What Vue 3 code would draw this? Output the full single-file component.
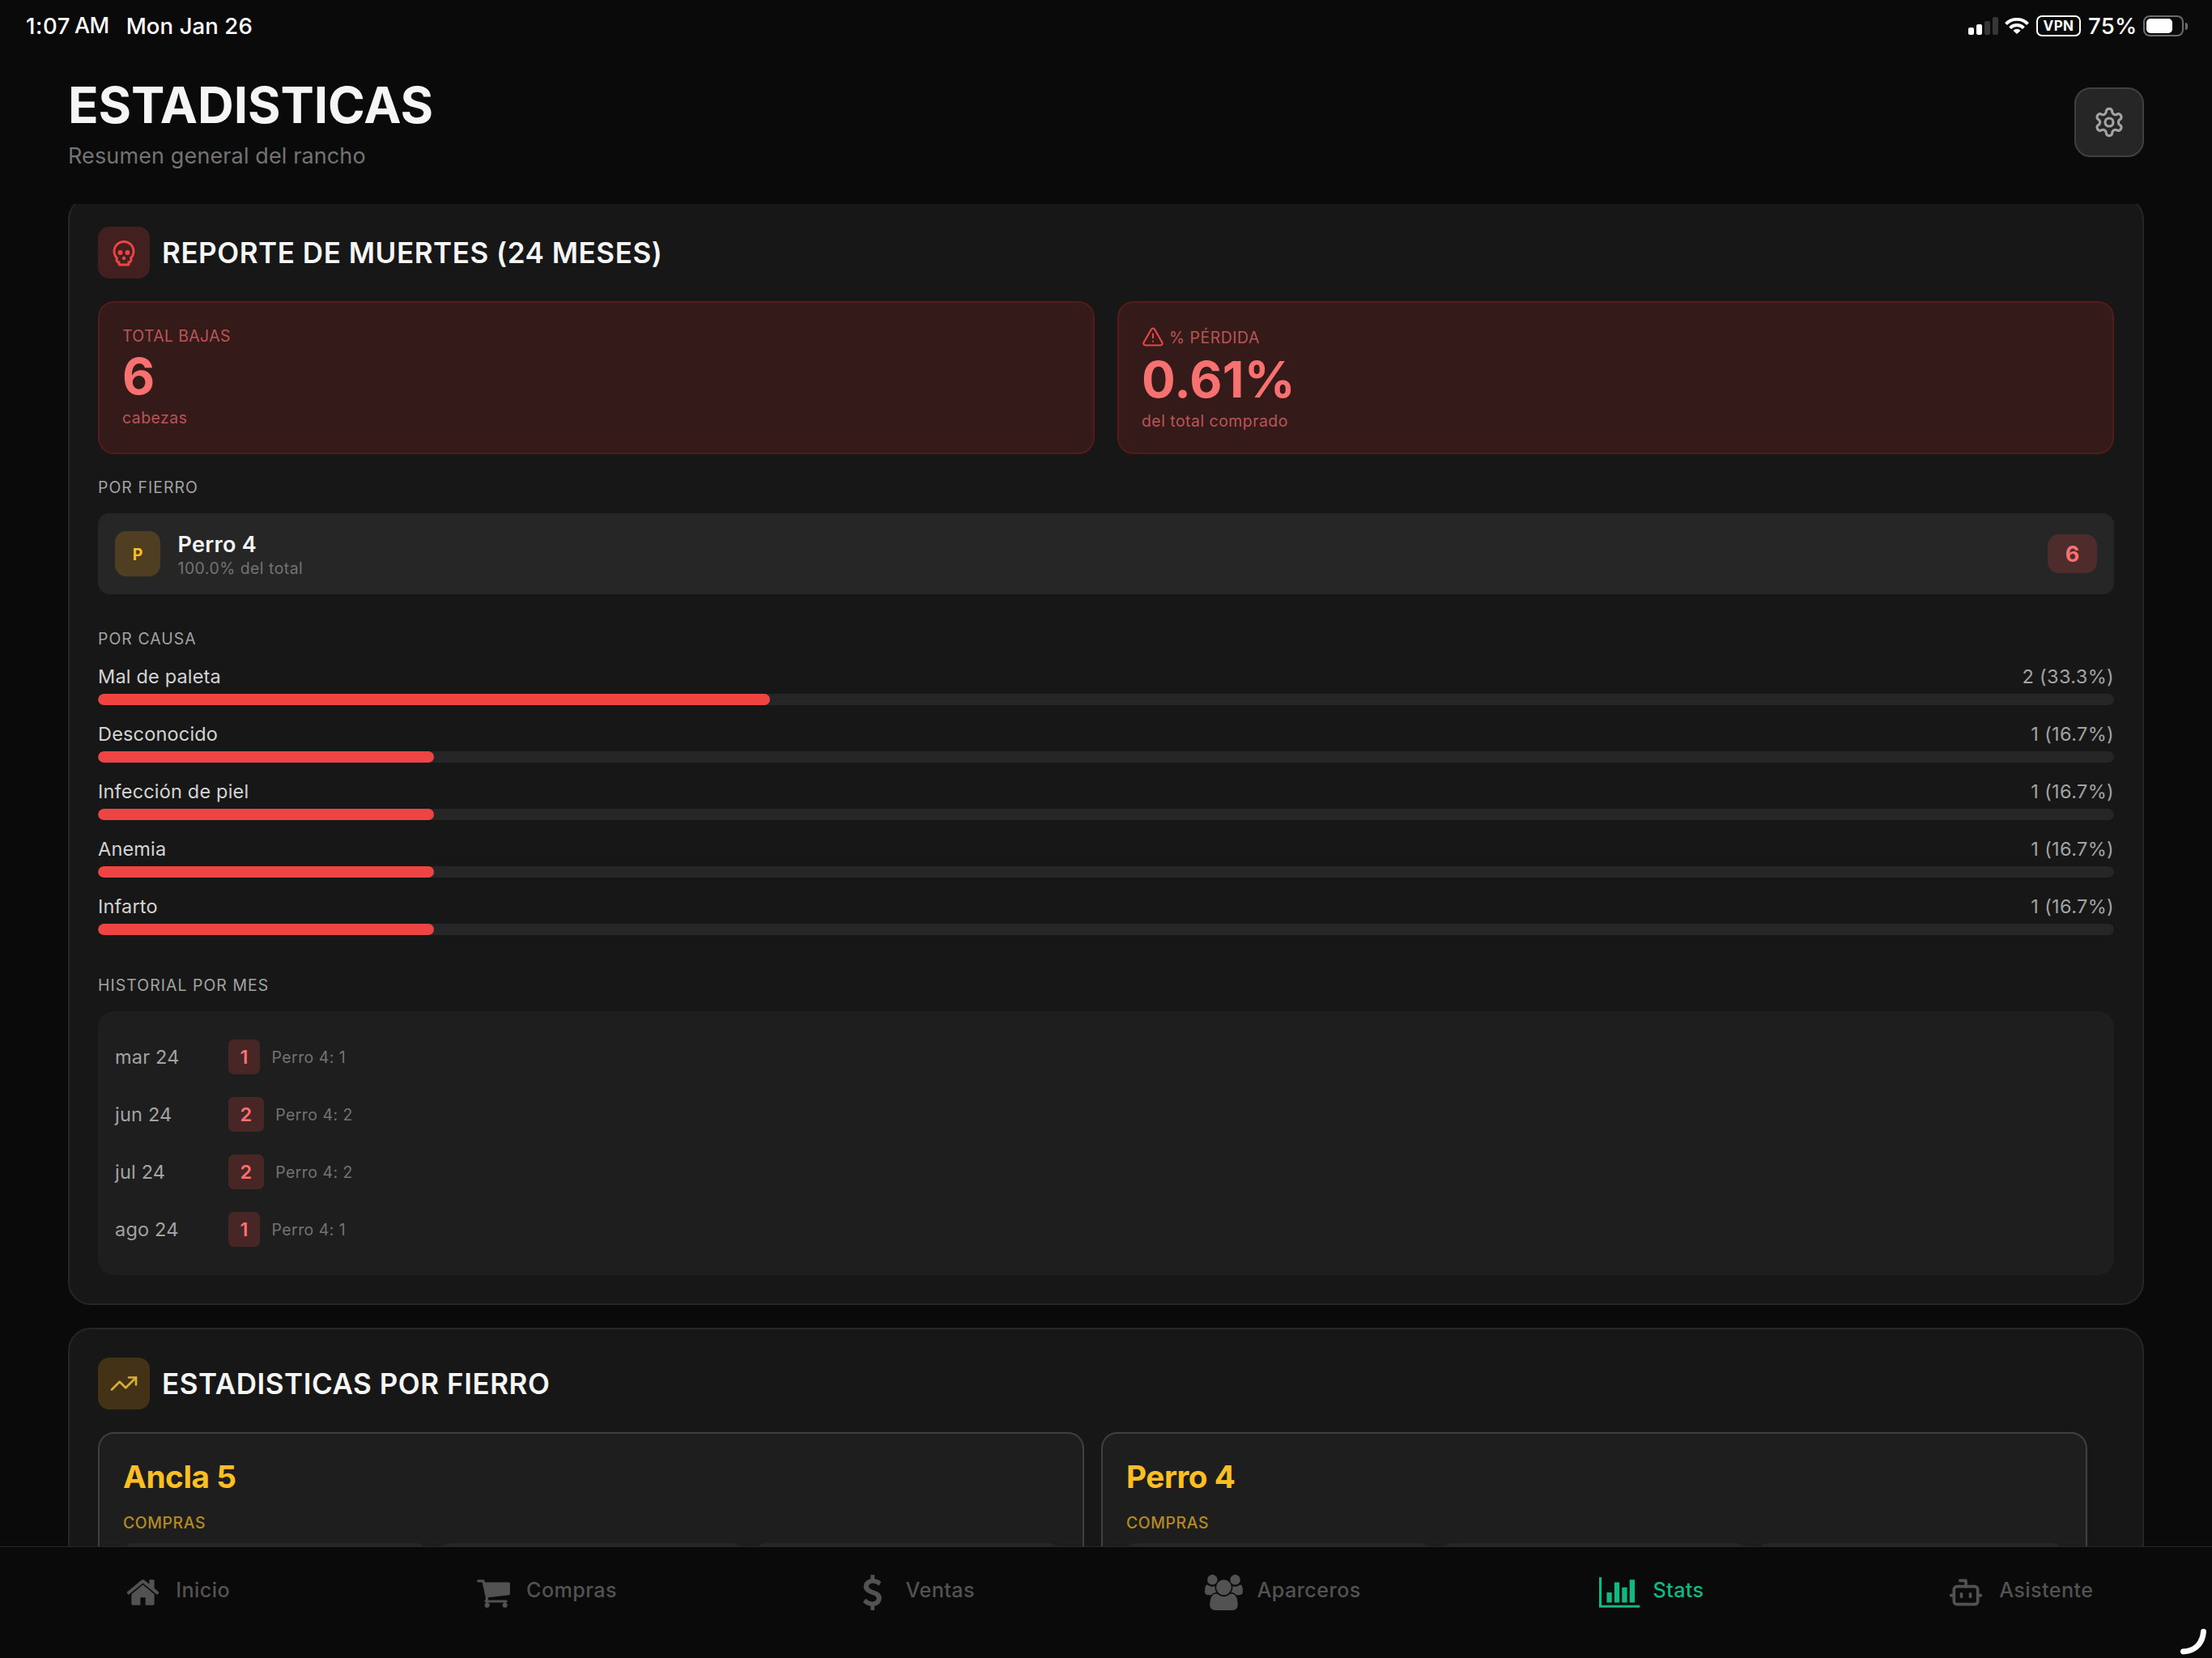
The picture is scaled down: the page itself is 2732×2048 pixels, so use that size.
<script setup>
const causas = [
  { nombre: 'Mal de paleta', valor: '2 (33.3%)', pct: 33.33 },
  { nombre: 'Desconocido', valor: '1 (16.7%)', pct: 16.67 },
  { nombre: 'Infección de piel', valor: '1 (16.7%)', pct: 16.67 },
  { nombre: 'Anemia', valor: '1 (16.7%)', pct: 16.67 },
  { nombre: 'Infarto', valor: '1 (16.7%)', pct: 16.67 },
]

const historial = [
  { mes: 'mar 24', total: 1, detalle: 'Perro 4: 1' },
  { mes: 'jun 24', total: 2, detalle: 'Perro 4: 2' },
  { mes: 'jul 24', total: 2, detalle: 'Perro 4: 2' },
  { mes: 'ago 24', total: 1, detalle: 'Perro 4: 1' },
]

const fierros = ['Ancla 5', 'Perro 4']

const tabs = [
  {
    label: 'Inicio',
    box: '64 0 1664 1792',
    width: 41,
    path: 'M1472 992v480q0 26-19 45t-45 19h-384v-384h-256v384h-384q-26 0-45-19t-19-45v-480q0-1 .5-3t.5-3l575-474 575 474q1 2 1 6zm223-69l-62 74q-8 9-21 11h-3q-13 0-21-7l-692-577-692 577q-12 8-24 7-13-2-21-11l-62-74q-8-10-7-23.5t11-21.5l719-599q32-26 76-26t76 26l244 204v-195q0-14 9-23t23-9h192q14 0 23 9t9 23v408l219 182q10 8 11 21.5t-7 23.5z',
  },
  {
    label: 'Compras',
    box: '64 0 1664 1792',
    width: 41,
    path: 'M704 1536q0 52-38 90t-90 38-90-38-38-90 38-90 90-38 90 38 38 90zm896 0q0 52-38 90t-90 38-90-38-38-90 38-90 90-38 90 38 38 90zm128-1088v512q0 24-16.5 42.5t-40.5 21.5l-1044 122q13 60 13 70 0 16-24 64h920q26 0 45 19t19 45-19 45-45 19h-1024q-26 0-45-19t-19-45q0-11 8-31.5t16-36 21.5-40 15.5-29.5l-177-823h-204q-26 0-45-19t-19-45 19-45 45-19h256q16 0 28.5 6.5t19.5 15.5 13 24.5 8 26 5.5 29.5 4.5 26h1201q26 0 45 19t19 45z',
  },
  {
    label: 'Ventas',
    box: '384 0 1024 1792',
    width: 25,
    path: 'M1362 1185q0 153-99.5 263.5t-258.5 136.5v175q0 14-9 23t-23 9h-135q-13 0-22.5-9.5t-9.5-22.5v-175q-66-9-127.5-31t-101.5-44.5-74-48-46.5-37.5-17.5-18q-17-21-2-41l103-135q7-10 23-12 15-2 24 9l2 2q113 99 243 125 37 8 74 8 81 0 142.5-43t61.5-122q0-28-15-53t-33.5-42-58.5-37.5-66-32-80-32.5q-39-16-61.5-25t-61.5-26.5-62.5-31-56.5-35.5-53.5-42.5-43.5-49-35.5-58-21-66.5-8.5-78q0-138 98-242t255-134v-180q0-13 9.5-22.5t22.5-9.5h135q14 0 23 9t9 23v176q57 6 110.5 23t87 33.5 63.5 37.5 39 29 15 14q17 18 5 38l-81 146q-8 15-23 16-14 3-27-7-3-3-14.5-12t-39-26.5-58.5-32-74.5-26-85.5-11.5q-95 0-155 43t-60 111q0 26 8.5 48t29.5 41.5 39.5 33 56 31 60.5 27 70 27.5q53 20 81 31.5t76 35 75.5 42.5 62 50 53 63.5 31.5 76.5 13 94z',
  },
  {
    label: 'Aparceros',
    box: '0 0 1920 1792',
    width: 47,
    path: 'M593 896q-162 5-265 128h-134q-82 0-138-40.5t-56-118.5q0-353 124-353 6 0 43.5 21t97.5 42.5 119 21.5q67 0 133-23-5 37-5 66 0 139 81 256zm1071 637q0 120-73 189.5t-194 69.5h-874q-121 0-194-69.5t-73-189.5q0-53 3.5-103.5t14-109 26.5-108.5 43-97.5 62-81 85.5-53.5 111.5-20q10 0 43 21.5t73 48 107 48 135 21.5 135-21.5 107-48 73-48 43-21.5q61 0 111.5 20t85.5 53.5 62 81 43 97.5 26.5 108.5 14 109 3.5 103.5zm-1024-1277q0 106-75 181t-181 75-181-75-75-181 75-181 181-75 181 75 75 181zm704 384q0 159-112.5 271.5t-271.5 112.5-271.5-112.5-112.5-271.5 112.5-271.5 271.5-112.5 271.5 112.5 112.5 271.5zm576 225q0 78-56 118.5t-138 40.5h-134q-103-123-265-128 81-117 81-256 0-29-5-66 66 23 133 23 59 0 119-21.5t97.5-42.5 43.5-21q124 0 124 353zm-128-609q0 106-75 181t-181 75-181-75-75-181 75-181 181-75 181 75 75 181z',
  },
  {
    label: 'Stats',
    active: true,
    box: '0 0 2048 1792',
    width: 50.3,
    path: 'M640 896v512h-256v-512h256zm384-512v1024h-256v-1024h256zm1024 1152v128h-2048v-1536h128v1408h1920zm-640-896v768h-256v-768h256zm384-384v1152h-256v-1152h256z',
  },
  { label: 'Asistente', box: '0 0 24 24', width: 44, bot: true },
]
</script>

<template>
  <div class="app">
    <div class="status">
      <div class="status-left">
        <span class="hour">1:07</span><span class="ampm">AM</span><span class="date">Mon Jan 26</span>
      </div>
      <div class="status-right">
        <div class="signal"><i class="s1"></i><i class="s2"></i><i class="s3"></i><i class="s4"></i></div>
        <svg class="wifi" viewBox="0 0 30 20" fill="none" stroke="#fff" stroke-width="3.9">
          <path d="M1.5 7.6A18.6 18.6 0 0 1 28.5 7.6" />
          <path d="M6.6 12.6A11.6 11.6 0 0 1 23.4 12.6" />
          <path d="M15 20L10.4 15.7A6.6 6.6 0 0 1 19.6 15.7Z" fill="#fff" stroke="none" />
        </svg>
        <span class="vpn">VPN</span>
        <span class="pct">75%</span>
        <div class="battery"><div class="shell"><div class="charge"></div></div><div class="nub"></div></div>
      </div>
    </div>

    <header class="header">
      <div>
        <h1>ESTADISTICAS</h1>
        <p class="subtitle">Resumen general del rancho</p>
      </div>
      <button class="settings">
        <svg viewBox="0 0 24 24" fill="none" stroke="#a3a3a3" stroke-width="1.9" stroke-linecap="round" stroke-linejoin="round">
          <path d="M12.22 2h-.44a2 2 0 0 0-2 2v.18a2 2 0 0 1-1 1.73l-.43.25a2 2 0 0 1-2 0l-.15-.08a2 2 0 0 0-2.73.73l-.22.38a2 2 0 0 0 .73 2.73l.15.1a2 2 0 0 1 1 1.72v.51a2 2 0 0 1-1 1.74l-.15.09a2 2 0 0 0-.73 2.73l.22.38a2 2 0 0 0 2.73.73l.15-.08a2 2 0 0 1 2 0l.43.25a2 2 0 0 1 1 1.73V20a2 2 0 0 0 2 2h.44a2 2 0 0 0 2-2v-.18a2 2 0 0 1 1-1.73l.43-.25a2 2 0 0 1 2 0l.15.08a2 2 0 0 0 2.73-.73l.22-.39a2 2 0 0 0-.73-2.73l-.15-.08a2 2 0 0 1-1-1.74v-.5a2 2 0 0 1 1-1.74l.15-.09a2 2 0 0 0 .73-2.73l-.22-.38a2 2 0 0 0-2.73-.73l-.15.08a2 2 0 0 1-2 0l-.43-.25a2 2 0 0 1-1-1.73V4a2 2 0 0 0-2-2z" />
          <circle cx="12" cy="12" r="3" />
        </svg>
      </button>
    </header>

    <main class="content">
      <section class="card scrolled">
        <div class="card-head">
          <div class="icon-box red">
            <svg viewBox="0 0 24 24" fill="none" stroke="#ef4444" stroke-width="1.9" stroke-linecap="round" stroke-linejoin="round">
              <circle cx="9" cy="12" r="1" />
              <circle cx="15" cy="12" r="1" />
              <path d="M8 20v2h8v-2" />
              <path d="m12.5 17-.5-1-.5 1h1z" />
              <path d="M16 20a2 2 0 0 0 1.56-3.25 8 8 0 1 0-11.12 0A2 2 0 0 0 8 20" />
            </svg>
          </div>
          <h2>REPORTE DE MUERTES (24 MESES)</h2>
        </div>

        <div class="totals">
          <div class="total">
            <div class="total-label">TOTAL BAJAS</div>
            <div class="total-value">6</div>
            <div class="total-note">cabezas</div>
          </div>
          <div class="total">
            <div class="total-label with-icon">
              <svg viewBox="0 0 24 24" fill="none" stroke="#ef4444" stroke-width="1.8" stroke-linecap="round" stroke-linejoin="round">
                <path d="m21.73 18-8-14a2 2 0 0 0-3.48 0l-8 14A2 2 0 0 0 4 21h16a2 2 0 0 0 1.73-3Z" />
                <path d="M12 9v4" />
                <path d="M12 17h.01" />
              </svg>
              <span>% PÉRDIDA</span>
            </div>
            <div class="total-value">0.61%</div>
            <div class="total-note">del total comprado</div>
          </div>
        </div>

        <h3>POR FIERRO</h3>
        <div class="fierro-row">
          <div class="initial">P</div>
          <div class="fierro-text">
            <div class="fierro-name">Perro 4</div>
            <div class="fierro-share">100.0% del total</div>
          </div>
          <div class="count">6</div>
        </div>

        <h3 class="after-row">POR CAUSA</h3>
        <div class="causas">
          <div v-for="c in causas" :key="c.nombre">
            <div class="causa-line"><span class="causa-name">{{ c.nombre }}</span><span>{{ c.valor }}</span></div>
            <div class="track"><div class="fill" :style="{ width: c.pct + '%' }"></div></div>
          </div>
        </div>

        <h3 class="after-bars">HISTORIAL POR MES</h3>
        <div class="historial">
          <div v-for="h in historial" :key="h.mes" class="mes-row">
            <span class="mes">{{ h.mes }}</span>
            <span class="mes-total">{{ h.total }}</span>
            <span class="mes-detail">{{ h.detalle }}</span>
          </div>
        </div>
      </section>

      <section class="card">
        <div class="card-head">
          <div class="icon-box amber">
            <svg viewBox="0 0 24 24" fill="none" stroke="#d4af37" stroke-width="1.8" stroke-linecap="round" stroke-linejoin="round">
              <path d="M22 7l-8.5 8.5-5-5L2 17" />
              <path d="M16 7h6v6" />
            </svg>
          </div>
          <h2>ESTADISTICAS POR FIERRO</h2>
        </div>
        <div class="carousel">
          <article v-for="f in fierros" :key="f" class="fierro-card">
            <div class="fierro-title">{{ f }}</div>
            <div class="fierro-section">COMPRAS</div>
            <div class="boxes"><div v-for="n in 3" :key="n" class="box"></div></div>
          </article>
        </div>
      </section>
    </main>

    <nav class="tabbar">
      <div v-for="t in tabs" :key="t.label" class="tab" :class="{ active: t.active }">
        <span class="tab-icon">
          <svg v-if="t.bot" :viewBox="t.box" :width="t.width" height="44" fill="none" stroke="currentColor" stroke-width="2" stroke-linecap="round" stroke-linejoin="round">
            <path d="M12 8V4H8" />
            <rect x="4" y="8" width="16" height="12" rx="2" />
            <path d="M2 14h2M20 14h2M15 13v2M9 13v2" />
          </svg>
          <svg v-else :viewBox="t.box" :width="t.width" height="44" fill="currentColor"><path :d="t.path" /></svg>
        </span>
        <span class="tab-label">{{ t.label }}</span>
      </div>
    </nav>

    <svg class="corner-mark" viewBox="0 0 40 40" fill="none" stroke="#fff" stroke-width="7" stroke-linecap="round">
      <path d="M29.5 7.5C28.5 20 21 31.5 4.5 32" />
    </svg>
  </div>
</template>

<style>
body { background: #0a0a0a; }
</style>

<style scoped>
.app {
  position: relative;
  display: flex;
  flex-direction: column;
  width: 2732px;
  height: 2048px;
  overflow: hidden;
  background: #0a0a0a;
  color: #f5f5f5;
  font-family: Inter, "Liberation Sans", sans-serif;
}
h1, h2, h3, p { margin: 0; }
svg { display: block; flex: none; }

.status {
  display: flex;
  justify-content: space-between;
  height: 64px;
  padding: 0 30px 0 32px;
  color: #fff;
  font-size: 27.5px;
  font-weight: 450;
  line-height: 64px;
}
.status-left { display: flex; }
.hour { letter-spacing: 0.6px; }
.ampm { margin-left: 5px; font-size: 27px; letter-spacing: -0.6px; }
.date { margin-left: 21px; letter-spacing: 0.1px; }
.status-right { display: flex; align-items: center; }
.signal { display: flex; align-items: flex-end; gap: 3px; height: 22px; margin-right: 8px; }
.signal i { width: 7px; border-radius: 2px; background: #fff; }
.signal .s1 { height: 9px; }
.signal .s2 { height: 13px; }
.signal .s3 { height: 17px; background: #363636; }
.signal .s4 { height: 22px; background: #363636; }
.wifi { width: 30px; height: 20px; margin-right: 9px; }
.vpn {
  box-sizing: border-box;
  width: 55px;
  height: 26px;
  margin-right: 9px;
  border: 2px solid #fff;
  border-radius: 7px;
  font-size: 17px;
  font-weight: 700;
  line-height: 23px;
  letter-spacing: 0.4px;
  text-align: center;
}
.pct { width: 68px; letter-spacing: 0.3px; }
.battery { display: flex; align-items: center; gap: 2px; }
.shell { width: 50px; height: 26px; padding: 2px; box-sizing: border-box; border: 2px solid #6c6c6c; border-radius: 8px; }
.charge { width: 32px; height: 18px; border-radius: 5px; background: #fff; }
.nub { width: 3px; height: 9px; border-radius: 0 4px 4px 0; background: #6c6c6c; }

.header {
  display: flex;
  justify-content: space-between;
  align-items: center;
  box-sizing: border-box;
  height: 188px;
  padding: 27px 84px 41px;
}
h1 { font-size: 62px; font-weight: 700; line-height: 77px; letter-spacing: -0.1px; }
.subtitle { margin-top: 7px; color: #737373; font-size: 27px; line-height: 36px; letter-spacing: 0.12px; }
.settings {
  display: flex;
  align-items: center;
  justify-content: center;
  box-sizing: border-box;
  width: 86px;
  height: 86px;
  padding: 0;
  border: 2px solid #404040;
  border-radius: 20px;
  background: #262626;
}
.settings svg { width: 40px; height: 40px; }

.content {
  display: flex;
  flex-direction: column;
  gap: 28px;
  height: 1658px;
  padding: 0 84px;
  overflow: hidden;
}
.card {
  flex: none;
  padding: 35px;
  border: 2px solid #262626;
  border-radius: 28px;
  background: #171717;
}
.card.scrolled { margin-top: -9px; }
.card-head { display: flex; align-items: center; gap: 15px; height: 64px; margin-bottom: 28px; }
.icon-box { display: flex; align-items: center; justify-content: center; width: 64px; height: 64px; border-radius: 14px; }
.icon-box svg { width: 36px; height: 36px; }
.icon-box.red { background: #422020; }
.icon-box.amber { background: #433215; }
h2 { font-size: 35px; font-weight: 570; line-height: 44px; letter-spacing: 0.55px; }

.totals { display: flex; gap: 28px; }
.total {
  flex: 1;
  padding: 28px;
  border: 2px solid #551b1b;
  border-radius: 20px;
  background: #351a1a;
}
.total-label, .total-note { color: #ba5555; font-size: 19.4px; line-height: 26px; height: 24px; letter-spacing: 0.5px; }
.total-label { letter-spacing: 0.4px; }
.with-icon { display: flex; align-items: center; gap: 6px; height: 28px; letter-spacing: 0.55px; }
.with-icon span { padding-top: 2px; }
.with-icon svg { width: 28px; height: 28px; }
.total-value { color: #f87171; font-size: 62px; font-weight: 700; line-height: 77px; letter-spacing: 0.2px; }

h3 { margin: 29px 0 20px; color: #a3a3a3; font-size: 19.4px; font-weight: 400; line-height: 24px; letter-spacing: 1.07px; }
h3.after-row { margin-top: 43px; }
h3.after-bars { margin-top: 50px; }

.fierro-row {
  display: flex;
  align-items: center;
  box-sizing: border-box;
  height: 100px;
  padding: 0 21px;
  border-radius: 14px;
  background: #262626;
}
.initial {
  width: 56px;
  height: 56px;
  border-radius: 14px;
  background: #4f3e21;
  color: #fbbf24;
  font-size: 19.4px;
  font-weight: 700;
  line-height: 58px;
  text-align: center;
}
.fierro-text { flex: 1; margin-left: 21.5px; }
.fierro-name { font-size: 27px; font-weight: 600; line-height: 35px; letter-spacing: 0.3px; }
.fierro-share { color: #737373; font-size: 19.4px; line-height: 24px; letter-spacing: 0.5px; }
.count {
  width: 61px;
  height: 48px;
  border-radius: 14px;
  background: #4e2c2c;
  color: #f87171;
  font-size: 27px;
  font-weight: 700;
  line-height: 49px;
  text-align: center;
}

.causas { display: flex; flex-direction: column; gap: 21px; }
.causa-line {
  display: flex;
  justify-content: space-between;
  color: #a3a3a3;
  font-size: 23.5px;
  line-height: 29px;
  letter-spacing: 0.36px;
}
.causa-name { color: #d4d4d4; letter-spacing: 0.18px; }
.track { height: 14px; margin-top: 7px; border-radius: 7px; background: #262626; overflow: hidden; }
.fill { height: 14px; border-radius: 7px; background: #ef4444; }

.historial {
  display: flex;
  flex-direction: column;
  gap: 28px;
  padding: 35px 21px;
  border-radius: 20px;
  background: #1e1e1e;
}
.mes-row { display: flex; align-items: center; height: 43px; }
.mes { width: 140px; color: #a3a3a3; font-size: 23.5px; letter-spacing: 0.2px; }
.mes-total {
  padding: 0 14px 0 14.5px;
  border-radius: 7px;
  background: #482626;
  color: #f87171;
  font-size: 23.5px;
  font-weight: 600;
  line-height: 43px;
  letter-spacing: 0.5px;
}
.mes-detail { margin-left: 14.5px; color: #737373; font-size: 19.4px; letter-spacing: 0.5px; }

.carousel { display: flex; gap: 21px; }
.fierro-card {
  box-sizing: border-box;
  flex: none;
  width: 1218px;
  height: 400px;
  padding: 28px;
  border: 2px solid #404040;
  border-radius: 20px;
  background: #1e1e1e;
}
.fierro-title { margin-left: 1px; color: #fbbf24; font-size: 38.8px; font-weight: 700; line-height: 49px; letter-spacing: -0.5px; }
.fierro-section { margin: 21px 0 13px 1px; color: #b48b22; font-size: 19.4px; font-weight: 500; line-height: 24px; letter-spacing: 0.6px; }
.boxes { display: flex; gap: 14px; }
.box { flex: 1; height: 120px; border-radius: 14px; background: #262626; }

.tabbar { display: flex; height: 137px; border-top: 1px solid #262626; background: #0a0a0a; }
.tab {
  flex: 1;
  display: flex;
  justify-content: center;
  box-sizing: border-box;
  padding: 34px 20px 0 0;
  color: #525252;
}
.tab.active { color: #10b981; }
.tab.active .tab-icon { width: 54px; }
.tab.active .tab-label { margin-left: 14px; }
.tab-icon { display: flex; justify-content: center; width: 50px; height: 44px; }
.tab-label { margin-left: 16px; font-size: 25.2px; font-weight: 480; line-height: 39px; letter-spacing: 0.4px; }

.corner-mark { position: absolute; right: 0; bottom: 0; width: 40px; height: 40px; }
</style>
